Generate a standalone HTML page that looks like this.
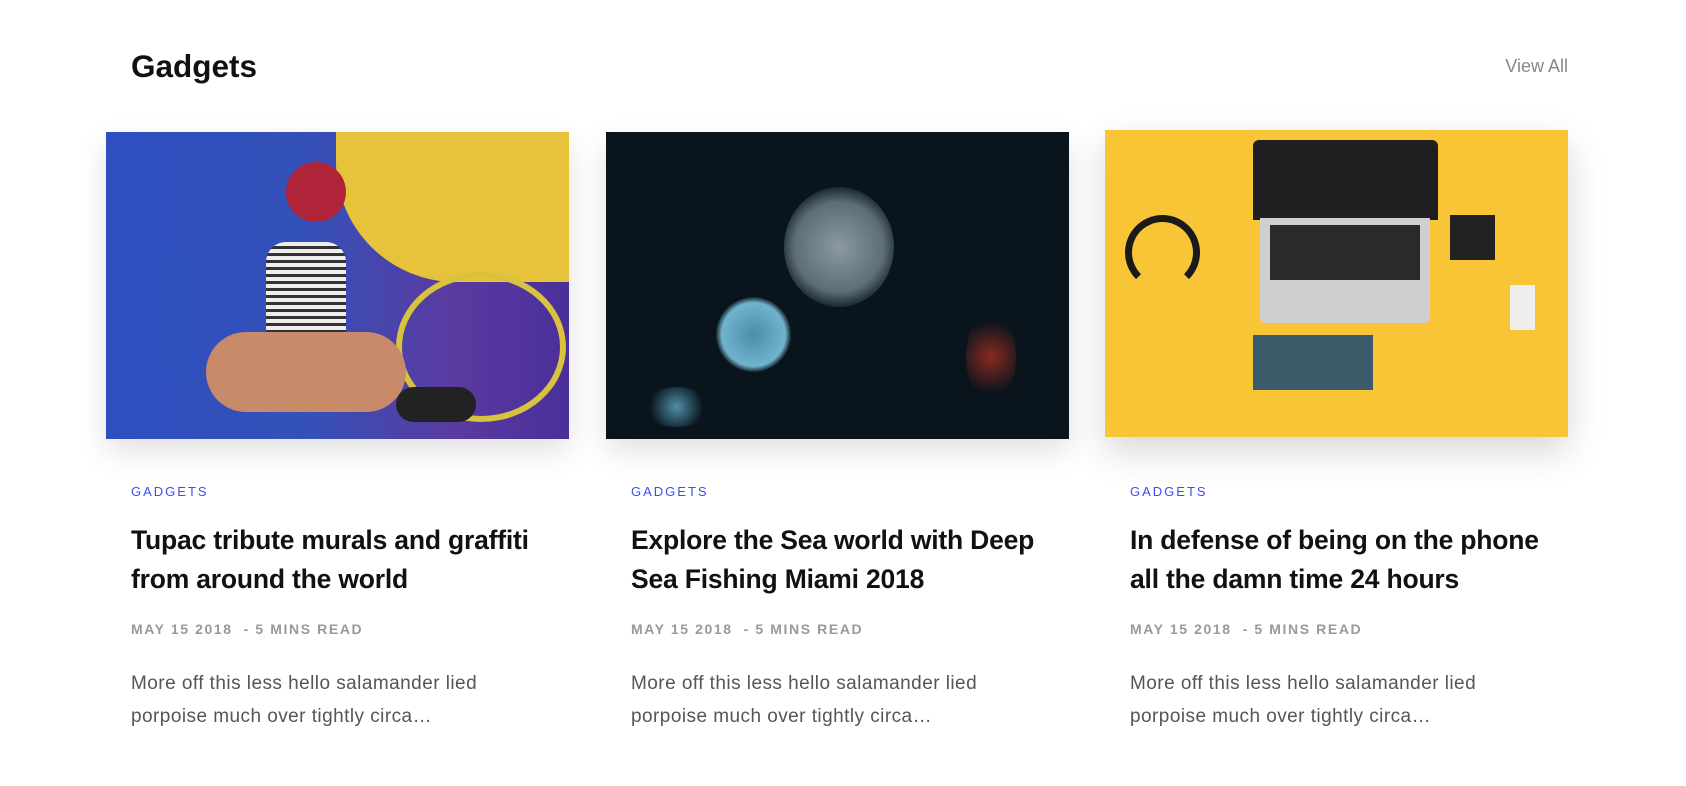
<!DOCTYPE html>
<html><head><meta charset="utf-8"><style>
*{margin:0;padding:0;box-sizing:border-box}
body{width:1686px;height:786px;background:#fff;font-family:"Liberation Sans",Arial,sans-serif;position:relative;overflow:hidden}
.h{position:absolute;left:131px;top:48px;font-size:31.5px;font-weight:bold;color:#111}
.va{position:absolute;right:118px;top:56px;font-size:18px;color:#888}
.card{position:absolute;top:132px;width:463px}
.img{width:463px;height:307px;position:relative;overflow:hidden;box-shadow:0 12px 28px rgba(0,0,0,.12)}
.txt{padding-left:25px}
.cat{margin-top:45px;font-size:13px;letter-spacing:2px;color:#3d4cf0;line-height:16px}
.t{margin-top:21px;font-size:26.5px;font-weight:bold;color:#111;line-height:39px;letter-spacing:-.2px}
.m{margin-top:22px;font-size:14px;letter-spacing:1.6px;color:#999;font-weight:bold;line-height:16px}
.e{margin-top:30px;font-size:19px;color:#555;line-height:33px;letter-spacing:.45px}
</style></head><body>
<div class="h">Gadgets</div>
<div class="va">View All</div>

<div class="card" style="left:106px">
<div class="img" style="background:linear-gradient(90deg,#2d4fc0 0%,#3550b8 45%,#5b3aa0 75%,#4a2f9a 100%)">
<div style="position:absolute;left:230px;top:0;width:235px;height:150px;background:#e6c33a;border-bottom-left-radius:120px"></div>
<div style="position:absolute;left:290px;top:140px;width:170px;height:150px;border:6px solid #d9c23e;border-radius:50%"></div>
<div style="position:absolute;left:180px;top:30px;width:60px;height:60px;background:#b0243a;border-radius:50%"></div>
<div style="position:absolute;left:160px;top:110px;width:80px;height:120px;background:repeating-linear-gradient(#eee 0 4px,#333 4px 7px);border-radius:20px"></div>
<div style="position:absolute;left:100px;top:200px;width:200px;height:80px;background:#c98a6a;border-radius:40px"></div>
<div style="position:absolute;left:290px;top:255px;width:80px;height:35px;background:#222;border-radius:18px"></div>
</div>
<div class="txt"><div class="cat">GADGETS</div><div class="t">Tupac tribute murals and graffiti<br>from around the world</div><div class="m">MAY 15 2018 &nbsp;- 5 MINS READ</div><div class="e">More off this less hello salamander lied<br>porpoise much over tightly circa…</div></div>
</div>

<div class="card" style="left:606px">
<div class="img" style="background:#0a141c">
<div style="position:absolute;left:178px;top:55px;width:110px;height:120px;border-radius:50%;background:radial-gradient(circle,#8a9aa0 0%,#5d6e75 55%,rgba(40,60,70,.4) 75%,transparent 80%)"></div>
<div style="position:absolute;left:110px;top:165px;width:75px;height:75px;border-radius:50%;background:radial-gradient(circle,#4a8ea8 0%,#6fb3cc 60%,transparent 72%)"></div>
<div style="position:absolute;left:38px;top:255px;width:65px;height:40px;border-radius:50%;background:radial-gradient(circle,#4f8fa8,transparent 70%)"></div>
<div style="position:absolute;left:360px;top:180px;width:50px;height:90px;border-radius:50%;background:radial-gradient(circle,#8a2a20,transparent 70%)"></div>
</div>
<div class="txt"><div class="cat">GADGETS</div><div class="t">Explore the Sea world with Deep<br>Sea Fishing Miami 2018</div><div class="m">MAY 15 2018 &nbsp;- 5 MINS READ</div><div class="e">More off this less hello salamander lied<br>porpoise much over tightly circa…</div></div>
</div>

<div class="card" style="left:1105px;top:130px">
<div class="img" style="background:#f8c537;box-shadow:0 14px 34px rgba(0,0,0,.16)">
<div style="position:absolute;left:148px;top:10px;width:185px;height:80px;background:#1f1f22;border-radius:6px 6px 0 0"></div>
<div style="position:absolute;left:155px;top:88px;width:170px;height:105px;background:#cfcfd2;border-radius:0 0 6px 6px"></div>
<div style="position:absolute;left:165px;top:95px;width:150px;height:55px;background:#2a2a2c"></div>
<div style="position:absolute;left:20px;top:85px;width:75px;height:75px;border:7px solid #1a1a1a;border-radius:50%;border-bottom-color:transparent"></div>
<div style="position:absolute;left:148px;top:205px;width:120px;height:55px;background:#3b5a6a"></div>
<div style="position:absolute;left:345px;top:85px;width:45px;height:45px;background:#222"></div>
<div style="position:absolute;left:405px;top:155px;width:25px;height:45px;background:#eee"></div>
</div>
<div class="txt"><div class="cat" style="margin-top:47px">GADGETS</div><div class="t">In defense of being on the phone<br>all the damn time 24 hours</div><div class="m">MAY 15 2018 &nbsp;- 5 MINS READ</div><div class="e">More off this less hello salamander lied<br>porpoise much over tightly circa…</div></div>
</div>
</body></html>
